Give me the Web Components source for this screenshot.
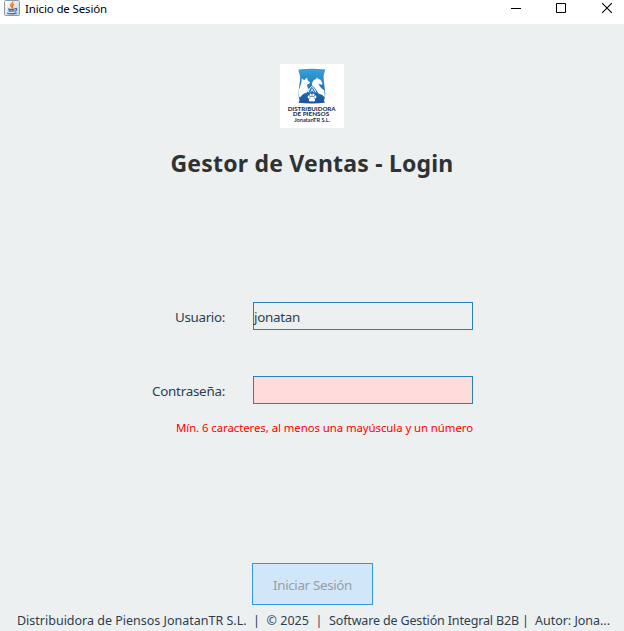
<!DOCTYPE html>
<html lang="es">
<head>
<meta charset="utf-8">
<title>Inicio de Sesión</title>
<style>
html,body{margin:0;height:100%;overflow:hidden;background:#ecf0f1}
body{font-family:"Noto Sans","Open Sans",sans-serif;color:#2c3e50}
</style>
</head>
<body>
<login-window></login-window>
<script>
// Single-line text whose letter spacing is adjusted to a given width.
class FitText extends HTMLElement{
  connectedCallback(){
    const r=this.attachShadow({mode:'open'});
    r.innerHTML='<style>:host{display:block;white-space:pre;line-height:20px}span{display:inline-block}</style><span></span>';
    const s=r.querySelector('span');
    s.textContent=this.getAttribute('text');
    const w=parseFloat(this.getAttribute('width'));
    this.style.width=w+'px';
    const n=s.textContent.length;
    s.style.letterSpacing=((w-s.getBoundingClientRect().width)/n)+'px';
  }
}
customElements.define('fit-text',FitText);

class JavaIcon extends HTMLElement{
  connectedCallback(){
    this.attachShadow({mode:'open'}).innerHTML=`<style>:host{display:block;width:16px;height:16px}svg{display:block}</style>
    <svg width="16" height="16" viewBox="0 0 16 16" fill="none">
      <defs><linearGradient id="g" x2="1" y2="1"><stop stop-color="#fff"/><stop offset="1" stop-color="#c3cdd6"/></linearGradient></defs>
      <rect x=".5" y=".5" width="15" height="15" rx="1" fill="url(#g)" stroke="#8b9aa6"/>
      <path d="M8.800 1.500c.8 1.700-3 2.500-2 4.200l1 1.600M10.200 4.200C8.300 5 8 5.700 8.600 6.600c.3.600 0 1-.5 1.400" stroke="#ec7414" stroke-width="1.400"/>
      <path d="M4 8.800c1.500.6 4.700.6 6.500 0M4.600 10.600c1.400.5 4 .5 5.600 0M3 13c2 1.100 7.500 1.100 9.500-.1M10.800 8.600c2.600-.5 2.400 1.900-.2 2.500" stroke="#3f7099" stroke-width="1.300"/>
    </svg>`;
  }
}
customElements.define('java-icon',JavaIcon);

class TitleBar extends HTMLElement{
  connectedCallback(){
    this.attachShadow({mode:'open'}).innerHTML=`<style>
    :host{display:flex;height:24px;box-sizing:border-box;background:#fff;color:#000;padding:0 11px 0 4px;align-items:flex-start}
    fit-text{font-size:11.500px;line-height:20px;margin:-1px 0 0 5px}
    .c{display:flex;margin-left:auto;gap:34px;padding-top:2px}
    svg{display:block}</style>
    <java-icon></java-icon><fit-text text="Inicio de Sesión" width="82"></fit-text>
    <div class="c"><svg width="12" height="12"><path d="M2 6.500h10" stroke="#000"/></svg>
    <svg width="12" height="12"><path d="M1.500 1.500h9v9h-9z" fill="none" stroke="#000"/></svg>
    <svg width="12" height="12"><path d="M1.200 1.200l9.600 9.600M10.800 1.200l-9.600 9.600" stroke="#000" stroke-width="1.100"/></svg></div>`;
  }
}
customElements.define('title-bar',TitleBar);

class CompanyLogo extends HTMLElement{
  connectedCallback(){
    this.attachShadow({mode:'open'}).innerHTML=`<style>:host{display:block;width:64px;height:64px;background:#fff}svg{display:block}text{font-family:Lato,sans-serif;fill:#1d3557}</style>
    <svg width="64" height="64" viewBox="0 0 64 64">
      <defs><linearGradient id="b" x2="0" y2="1"><stop stop-color="#36a3d9"/><stop offset=".6" stop-color="#2372b4"/><stop offset="1" stop-color="#1c5299"/></linearGradient></defs>
      <path d="M18.500 5.500Q32 4 45.300 5.500L44.600 8Q42.800 12 43.800 17L45.200 29Q45.400 34 44 36.500L44.800 38.700Q32 40.300 18.500 38.700L19.500 36.500Q18 32 18.800 26L20 16Q20.500 11 18.800 8Z" fill="url(#b)"/>
      <path d="M18.900 26L21.300 19L21.800 14.300L24.200 16.300L27 13.600L27.800 16.600L30 18.300L29.300 19.800L27 20.400Q27.200 23.500 28.800 25.600L27 28.500Q22.500 29.500 20 33.500L18.700 32Z" fill="#fff"/>
      <path d="M32 20.500Q32 16 36.200 15L37 13.200L38.300 15L40.500 15.800L42.600 19.300L41.500 20.800L38.600 19.800Q39.300 23 44.300 26.500L44.900 33.500Q43 30.500 38.500 29.500L34.500 23.500L32.300 21.700Z" fill="#fff"/>
      <path d="M28.300 28.300Q29 23.500 31.800 22.500Q34.500 24 35.800 28.300" fill="none" stroke="#fff" stroke-width="1"/>
      <path d="M31 24.500L34 28.300M33.200 24.500L30.200 28.300" stroke="#fff" stroke-width=".8"/>
      <g fill="#fff"><path d="M32 32.800C34 32.800 35.500 35.200 35 36.800C34.500 38 33 37.200 32 37.200S29.500 38 29 36.800C28.500 35.200 30 32.800 32 32.800Z"/><ellipse cx="28.700" cy="33" rx="1.100" ry="1.400"/><ellipse cx="30.700" cy="30.900" rx="1.100" ry="1.500"/><ellipse cx="33.300" cy="30.900" rx="1.100" ry="1.500"/><ellipse cx="35.300" cy="33" rx="1.100" ry="1.400"/></g>
      <text x="7.700" y="46.600" font-size="5.900" font-weight="900" textLength="48" lengthAdjust="spacingAndGlyphs">DISTRIBUIDORA</text>
      <text x="12.700" y="52.300" font-size="5.900" font-weight="900" textLength="36.500" lengthAdjust="spacingAndGlyphs">DE PIENSOS</text>
      <text x="14.300" y="58" font-size="5.400" font-weight="700" textLength="35.700" lengthAdjust="spacingAndGlyphs">JonatanTR S.L.</text>
    </svg>`;
  }
}
customElements.define('company-logo',CompanyLogo);

class FormField extends HTMLElement{
  connectedCallback(){
    this.attachShadow({mode:'open'}).innerHTML=`<style>
    :host{display:grid;grid-template-columns:225px 220px;column-gap:28px;align-items:center;height:28px;font-size:13.400px}
    .l{justify-self:end;padding-top:2px}
    .b{box-sizing:border-box;height:28px;border:1px solid #2980b9;padding-top:4px;background:var(--field-fill,transparent)}
    </style><fit-text class="l" text="${this.getAttribute('label')}" width="${this.getAttribute('label-width')}"></fit-text>
    <div class="b"><slot></slot></div>`;
  }
}
customElements.define('form-field',FormField);

class ActionButton extends HTMLElement{
  connectedCallback(){
    this.attachShadow({mode:'open'}).innerHTML=`<style>
    :host{display:grid;place-items:center;box-sizing:border-box;width:121px;height:42px;padding-top:2px;border:1px solid #3498db;background:#d1e6f9;color:#989ea4;font-size:13.400px}
    </style><slot></slot>`;
  }
}
customElements.define('action-button',ActionButton);

class LoginWindow extends HTMLElement{
  connectedCallback(){
    this.attachShadow({mode:'open'}).innerHTML=`<style>
    :host{display:flex;flex-direction:column;width:624px;height:631px;background:#ecf0f1}
    company-logo{margin:40px auto 0}
    .h{font-size:23px;font-weight:700;color:#2f3233;margin:25px auto 0;height:20px}
    .user{margin-top:129px}
    .pass{margin-top:46px;--field-fill:#ffdcdc}
    .err{color:#f00;font-size:11.400px;margin:14px 0 0 176px}
    action-button{margin:125px 0 0 252px}
    .foot{display:flex;font-size:12.500px;margin:6px 0 0 17px}
    </style>
    <title-bar></title-bar>
    <company-logo></company-logo>
    <fit-text class="h" text="Gestor de Ventas - Login" width="283"></fit-text>
    <form-field class="user" label="Usuario:" label-width="50"><fit-text text="jonatan" width="46"></fit-text></form-field>
    <form-field class="pass" label="Contraseña:" label-width="73"></form-field>
    <fit-text class="err" text="Mín. 6 caracteres, al menos una mayúscula y un número" width="297"></fit-text>
    <action-button><fit-text text="Iniciar Sesión" width="79"></fit-text></action-button>
    <div class="foot"><fit-text text="Distribuidora de Piensos JonatanTR S.L.  |  " width="249.500"></fit-text><fit-text text="© 2025  |  " width="62.500"></fit-text><fit-text text="Software de Gestión Integral B2B |  " width="206"></fit-text><fit-text text="Autor: Jona..." width="75"></fit-text></div>`;
  }
}
customElements.define('login-window',LoginWindow);
</script>
</body>
</html>
